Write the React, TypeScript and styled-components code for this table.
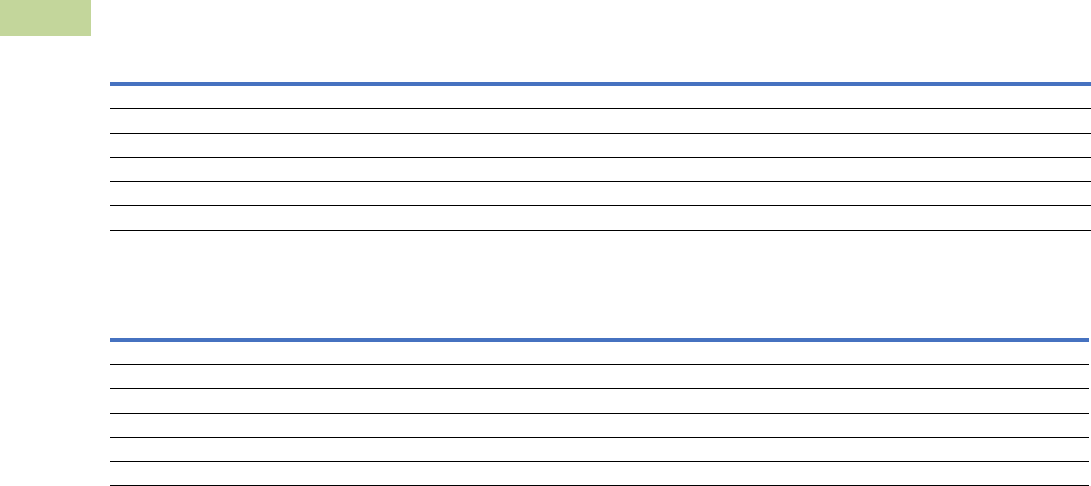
import React from "react";
import styled, { createGlobalStyle } from "styled-components";

const GlobalStyle = createGlobalStyle`
  html, body {
    margin: 0;
    padding: 0;
    background: #ffffff;
    overflow: hidden;
    font-family: "Liberation Sans", Arial, sans-serif;
  }
`;

const Page = styled.div`
  display: flex;
  flex-direction: column;
  width: 1091px;
  height: 486px;
`;

const Tab = styled.div`
  width: 91px;
  height: 36px;
  background: #c3d69b;
  flex-shrink: 0;
`;

const Section = styled.section<{ $top: number; $width: number }>`
  margin-top: ${(p) => p.$top}px;
  margin-left: 110px;
  width: ${(p) => p.$width}px;
  display: flex;
  flex-direction: column;
`;

const HeaderRule = styled.div`
  height: 4px;
  background: #4672c0;
`;

const Row = styled.div<{ $h: number }>`
  height: ${(p) => p.$h - 1}px;
  border-bottom: 1px solid #000000;
`;

const tables = [
  { top: 46, width: 981, rows: [23, 25, 24, 24, 24, 25] },
  { top: 107, width: 979, rows: [23, 24, 25, 24, 24, 24] },
];

export default function App() {
  return (
    <>
      <GlobalStyle />
      <Page>
        <Tab />
        {tables.map((t, i) => (
          <Section key={i} $top={t.top} $width={t.width}>
            <HeaderRule />
            {t.rows.map((h, j) => (
              <Row key={j} $h={h} />
            ))}
          </Section>
        ))}
      </Page>
    </>
  );
}
